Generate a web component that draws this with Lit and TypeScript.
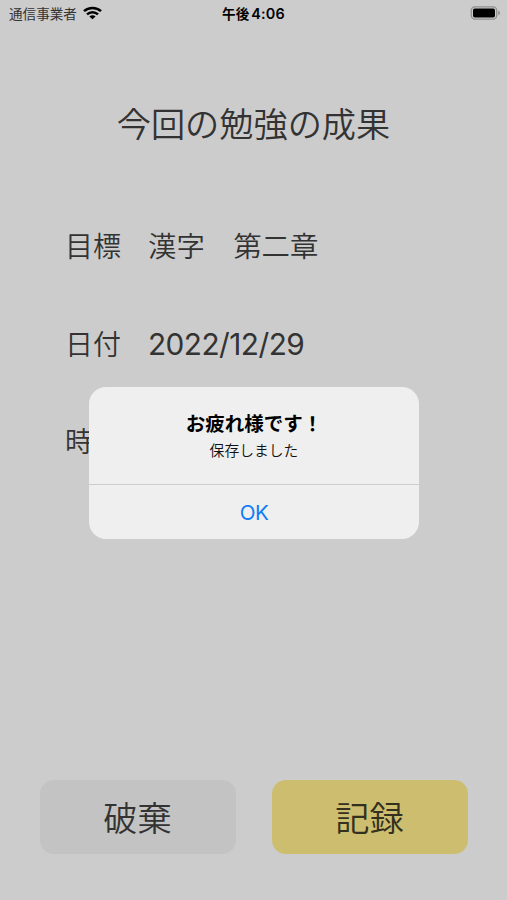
import { LitElement, html, css } from "lit";
import { customElement } from "lit/decorators.js";

@customElement("status-bar")
class StatusBar extends LitElement {
  static styles = css`
    :host {
      display: grid;
      grid-template-columns: 1fr auto 1fr;
      align-items: center;
      height: 26px;
      padding: 0 6px 0 9px;
      color: #000;
    }
    .left { display: flex; align-items: center; gap: 6px; }
    .carrier { font-size: 13.6px; font-weight: 400; color: #333; }
    .time { display: flex; align-items: baseline; gap: 2px; font-weight: 700; font-size: 13.6px; margin-right: 3px; }
    .digits { font: 600 14.4px Inter, sans-serif; letter-spacing: 0.2px; }
    .battery { justify-self: end; }
    svg { display: block; }
  `;
  render() {
    return html`
      <div class="left">
        <span class="carrier">通信事業者</span>
        <svg width="19" height="14" viewBox="0 0 19 14" fill="none" stroke="#000" stroke-width="2.5">
          <path d="M1 5.2C5.6 .9 13.4 .9 18 5.2" />
          <path d="M4 8.4C7.1 5.5 11.9 5.5 15 8.4" />
          <path d="M9.5 13.3 6.4 10.4C8.1 8.9 10.9 8.9 12.6 10.4Z" fill="#000" stroke="none" />
        </svg>
      </div>
      <div class="time"><span>午後</span><span class="digits">4:06</span></div>
      <svg class="battery" width="31" height="14" viewBox="0 0 31 14">
        <rect x="1.3" y=".8" width="25.4" height="12.4" rx="3.6" fill="none" stroke="#909090" stroke-width="1.3" />
        <rect x="3" y="2.5" width="22" height="9" rx="1.8" fill="#000" />
        <path d="M28.2 4.6C30.6 5.5 30.6 8.5 28.2 9.4Z" fill="#909090" />
      </svg>
    `;
  }
}

@customElement("alert-dialog")
class AlertDialog extends LitElement {
  static styles = css`
    :host {
      display: flex;
      flex-direction: column;
      box-sizing: border-box;
      width: 330px;
      height: 152px;
      border-radius: 17px;
      background: #efefef;
      overflow: hidden;
      text-align: center;
      color: #000;
    }
    .body { height: 98px; box-sizing: border-box; padding-top: 22px; border-bottom: 1px solid #cecece; }
    .title { font-size: 19.5px; line-height: 28px; font-weight: 700; }
    .message { font-size: 14.8px; line-height: 22px; font-weight: 350; color: #111; padding-top: 2px; }
    .ok {
      flex: 1;
      border: 0;
      padding: 1px 0 0;
      background: none;
      color: #0f7df5;
      font: 400 20.6px Inter, sans-serif;
      letter-spacing: -0.5px;
    }
  `;
  render() {
    return html`
      <div class="body">
        <div class="title">お疲れ様です！</div>
        <div class="message">保存しました</div>
      </div>
      <button class="ok">OK</button>
    `;
  }
}

@customElement("app-root")
class AppRoot extends LitElement {
  static styles = css`
    :host {
      position: relative;
      display: flex;
      flex-direction: column;
      width: 507px;
      height: 900px;
      overflow: hidden;
      background: #ccc;
      color: #333;
      font-family: "Noto Sans CJK JP", sans-serif;
      font-weight: 350;
    }
    h1 { margin: 69px 0 0; text-align: center; font-size: 34.2px; line-height: 54px; font-weight: 350; }
    .rows { display: flex; flex-direction: column; gap: 57.5px; padding: 76px 0 0 65px; }
    .row { display: flex; gap: 26px; height: 40px; align-items: center; font-size: 28.4px; line-height: 40px; white-space: pre; }
    .label { width: 57px; font-size: 28px; }
    .date { font: 400 29.8px Inter, sans-serif; letter-spacing: -0.55px; padding-top: 2px; }
    .actions { display: flex; gap: 36px; margin: auto 39px 46px 40px; }
    .action {
      flex: 1;
      height: 74px;
      border: 0;
      border-radius: 14px;
      padding: 0 1px 2px 0;
      background: #c3c3c3;
      color: #333;
      font: inherit;
      font-size: 34.2px;
    }
    .primary { background: #cdbe6f; color: #33301f; }
    alert-dialog { position: absolute; left: 89px; top: 387px; }
  `;
  render() {
    return html`
      <status-bar></status-bar>
      <h1>今回の勉強の成果</h1>
      <div class="rows">
        <div class="row"><span class="label">目標</span><span>漢字　第二章</span></div>
        <div class="row"><span class="label">日付</span><span class="date">2022/12/29</span></div>
        <div class="row"><span class="label">時間</span></div>
      </div>
      <div class="actions">
        <button class="action">破棄</button>
        <button class="action primary">記録</button>
      </div>
      <alert-dialog></alert-dialog>
    `;
  }
}
